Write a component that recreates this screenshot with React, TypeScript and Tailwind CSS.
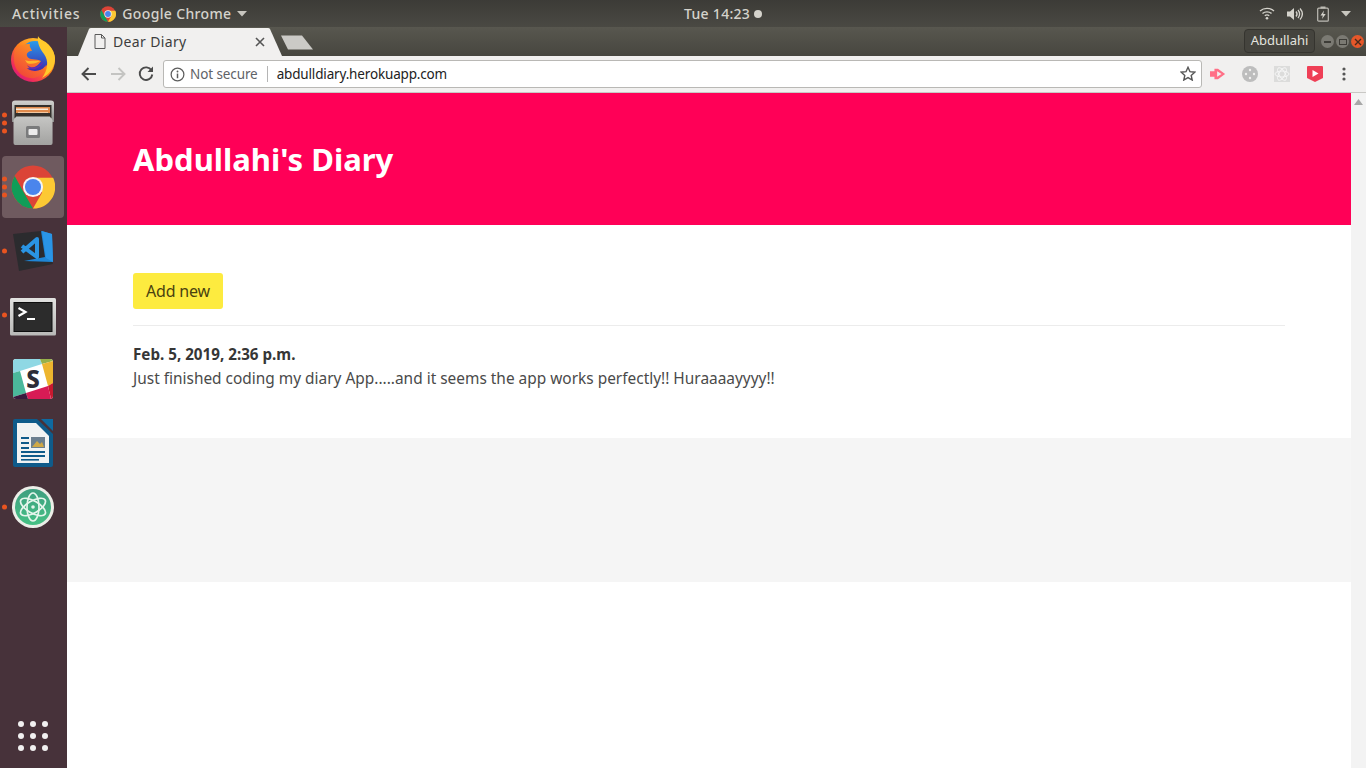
import React from "react";

const ubuntu = { fontFamily: '"Noto Sans","Open Sans",sans-serif' };

function Firefox() {
  return (
    <svg width="44" height="46" viewBox="0 0 44 46">
      <defs>
        <linearGradient id="ff1" x1="0.9" y1="0.1" x2="0.2" y2="0.95">
          <stop offset="0" stopColor="#ffd02e" />
          <stop offset="0.5" stopColor="#ff7a1c" />
          <stop offset="0.85" stopColor="#ef2b5c" />
          <stop offset="1" stopColor="#d81b7a" />
        </linearGradient>
        <linearGradient id="ff2" x1="0.5" y1="0" x2="0.5" y2="1">
          <stop offset="0" stopColor="#2a9bea" />
          <stop offset="1" stopColor="#3a2bb0" />
        </linearGradient>
        <linearGradient id="ff3" x1="0.8" y1="0" x2="0.2" y2="1">
          <stop offset="0" stopColor="#ff9a1f" />
          <stop offset="1" stopColor="#f0423a" />
        </linearGradient>
      </defs>
      <circle cx="22" cy="24" r="22" fill="url(#ff1)" />
      <circle cx="24" cy="20" r="15" fill="url(#ff2)" />
      <path d="M27 0 C29 5 43 9 44 22 C44 31 39 38 31 42 C37 34 38 25 33 18 C29 13 26 7 27 0Z" fill="#ffc92c" />
      <path d="M4 14 C8 9 13 8 19 8 C18 11 20 12 21 15 C18 15 15 17 16 20 C18 25 26 22 30 25 C27 30 22 33 16 32 C20 38 30 37 35 29 C33 38 26 43 19 42 C10 41 3 33 3 24 C3 20 3 17 4 14Z" fill="url(#ff3)" />
      <path d="M16 29 C20 33 28 32 32 25 C32 29 26 34 21 33 C19 33 17 31 16 29Z" fill="#6a2bb0" />
      <path d="M14 24 C18 26 24 24 29 25 C26 27 20 29 16 27Z" fill="#ffb52a" />
    </svg>
  );
}

function Files() {
  return (
    <svg width="42" height="46" viewBox="0 0 42 46">
      <defs>
        <linearGradient id="fg" x1="0" y1="0" x2="0" y2="1">
          <stop offset="0" stopColor="#c6c6c4" />
          <stop offset="1" stopColor="#a2a2a0" />
        </linearGradient>
        <linearGradient id="ft" x1="0" y1="0" x2="0" y2="1">
          <stop offset="0" stopColor="#d2d2d0" />
          <stop offset="1" stopColor="#8b8b89" />
        </linearGradient>
      </defs>
      <path d="M0 3 Q0 0.5 3 0.5 H39 Q42 0.5 42 3 V22 H0Z" fill="url(#ft)" />
      <rect x="2.5" y="5" width="37" height="13" fill="#34302c" />
      <rect x="4" y="7" width="34" height="6" fill="#e08a4c" />
      <rect x="4" y="8.5" width="32" height="1.5" fill="#f8ecdc" />
      <rect x="6" y="12" width="30" height="1" fill="#f3c79f" />
      <path d="M0 20 L3 16.5 H39 L42 20 V43 Q42 45 40 45 H2 Q0 45 0 43Z" fill="url(#fg)" transform="translate(1.5 0) scale(0.93 1)" />
      <rect x="14" y="26" width="14" height="12" rx="1.5" fill="#7a7b7c" />
      <rect x="16.5" y="29" width="9" height="6" rx="1" fill="#ececec" />
    </svg>
  );
}

function Chrome({ size = 44 }: { size?: number }) {
  return (
    <svg width={size} height={size} viewBox="0 0 48 48">
      <circle cx="24" cy="24" r="23.5" fill="#db4437" />
      <path d="M4 12 L14 30 L24 47.5 A23.5 23.5 0 0 1 4 12Z" fill="#109d58" />
      <path d="M24 14 H46 A23.5 23.5 0 0 1 24 47.5 L34 30Z" fill="#fcc934" />
      <circle cx="24" cy="24" r="11" fill="#f5f5f5" />
      <circle cx="24" cy="24" r="8.8" fill="#4a85ec" />
    </svg>
  );
}

function VSCode() {
  return (
    <svg width="44" height="42" viewBox="0 0 44 42">
      <path d="M2 4 L30 1 L42 34 L8 41Z" fill="#2b2b2e" />
      <path d="M30 1 L41 4 L42 32 L13 31 L34 27Z" fill="#1f86d6" />
      <path d="M31 1 L41 4 L42 32 L35 28Z" fill="#2a95e6" />
      <path d="M11 16 L26 27 V9 L11 22" fill="none" stroke="#2a94e2" strokeWidth="4" strokeLinejoin="round" />
    </svg>
  );
}

function Terminal() {
  return (
    <svg width="46" height="38" viewBox="0 0 46 38">
      <defs>
        <linearGradient id="tb" x1="0" y1="0" x2="0" y2="1">
          <stop offset="0" stopColor="#e2e2e0" />
          <stop offset="1" stopColor="#b9b9b7" />
        </linearGradient>
      </defs>
      <rect x="0" y="0" width="46" height="37.5" rx="1.5" fill="url(#tb)" />
      <rect x="3.5" y="4" width="39" height="30" fill="#0e0e0e" />
      <rect x="4.5" y="5" width="37" height="28" fill="#2c2c2c" />
      <path d="M8.5 10 L15.5 14 L8.5 18" fill="none" stroke="#fff" strokeWidth="2.2" />
      <rect x="17" y="20" width="8" height="2" fill="#fff" />
    </svg>
  );
}

function Slack() {
  return (
    <svg width="40" height="40" viewBox="0 0 40 40">
      <clipPath id="sl"><rect width="40" height="40" rx="3" /></clipPath>
      <g clipPath="url(#sl)">
        <rect width="40" height="40" fill="#fff" />
        <path d="M0 0 H27 L29 5 L7 12 L0 14Z" fill="#8fd8e4" />
        <path d="M27 0 H40 V2 L29 5Z" fill="#96b04a" />
        <path d="M29 5 L40 2 V24 L35 27Z" fill="#edb52e" />
        <path d="M35 27 L40 24 V40 H38Z" fill="#c8192f" />
        <path d="M13 34 L35 27 L38 40 H15Z" fill="#d81b55" />
        <path d="M0 14 L7 12 L13 34 L0 38Z" fill="#4bb89b" />
        <path d="M0 38 L13 34 L15 40 H0Z" fill="#3a1a3e" />
      </g>
      <text x="20" y="29" textAnchor="middle" fontFamily="'Noto Sans',sans-serif" fontWeight="800" fontSize="24" fill="#2d2d38">S</text>
    </svg>
  );
}

function Writer() {
  return (
    <svg width="40" height="48" viewBox="0 0 40 48">
      <path d="M2 0 H24 L40 15 V46 Q40 48 38 48 H2 Q0 48 0 46 V2 Q0 0 2 0Z" fill="#0f5b8a" />
      <path d="M28 0 H40 V12Z" fill="#0f6aa0" />
      <path d="M4 4 H23 L36 17 V44 H4Z" fill="#f1f3f3" />
      <rect x="8" y="18" width="8" height="2" fill="#0f5b8a" />
      <rect x="8" y="23" width="8" height="2" fill="#0f5b8a" />
      <rect x="8" y="28" width="8" height="2" fill="#0f5b8a" />
      <rect x="18" y="18" width="14" height="11" fill="#6b7f8f" />
      <path d="M19 28 L24 22 L27 25 L29 23 L31 28Z" fill="#cfa846" />
      <rect x="8" y="32" width="24" height="2" fill="#0f5b8a" />
      <rect x="8" y="36" width="24" height="2" fill="#0f5b8a" />
      <rect x="8" y="40" width="18" height="1.6" fill="#0f5b8a" />
    </svg>
  );
}

function Atom() {
  return (
    <svg width="42" height="42" viewBox="0 0 42 42">
      <defs>
        <linearGradient id="at" x1="0" y1="0" x2="0" y2="1">
          <stop offset="0" stopColor="#3f9f80" />
          <stop offset="1" stopColor="#45c084" />
        </linearGradient>
      </defs>
      <circle cx="21" cy="21" r="21" fill="#eceee8" />
      <circle cx="21" cy="21" r="18" fill="url(#at)" />
      <g fill="none" stroke="#e6f5ec" strokeWidth="1.7">
        <ellipse cx="21" cy="21" rx="14" ry="6" transform="rotate(30 21 21)" />
        <ellipse cx="21" cy="21" rx="14" ry="6" transform="rotate(-30 21 21)" />
        <ellipse cx="21" cy="21" rx="14" ry="6" transform="rotate(90 21 21)" />
      </g>
      <circle cx="21" cy="21" r="1.8" fill="#e6f5ec" />
    </svg>
  );
}

function Dots({ n }: { n: number }) {
  return (
    <div className="absolute left-[2px] top-1/2 -translate-y-1/2 flex flex-col gap-[3px]">
      {Array.from({ length: n }).map((_, i) => (
        <span key={i} className="block w-[5px] h-[5px] rounded-full bg-[#e95420]" />
      ))}
    </div>
  );
}

function DockItem({ children, dots = 0, active = false, cls = "" }: { children: React.ReactNode; dots?: number; active?: boolean; cls?: string }) {
  return (
    <div className={"relative w-[66px] h-[64px] shrink-0 flex items-center justify-center " + cls}>
      {active && <div className="absolute left-[2px] top-[1px] w-[62px] h-[62px] rounded-[4px] bg-[#6f5a5f]" />}
      {dots > 0 && <Dots n={dots} />}
      <div className="relative flex">{children}</div>
    </div>
  );
}

function Dock() {
  return (
    <aside className="w-[67px] shrink-0 bg-[#47323a] flex flex-col pb-[8px] h-full">
      <DockItem><Firefox /></DockItem>
      <DockItem dots={3}><Files /></DockItem>
      <DockItem dots={3} active><Chrome /></DockItem>
      <DockItem dots={1}><VSCode /></DockItem>
      <DockItem dots={1} cls="pt-[3px]"><Terminal /></DockItem>
      <DockItem><Slack /></DockItem>
      <DockItem><Writer /></DockItem>
      <DockItem dots={1}><Atom /></DockItem>
      <div className="flex-1" />
      <div className="grid grid-cols-3 gap-[6px] w-[30px] ml-[18px] mb-[9px]">
        {Array.from({ length: 9 }).map((_, i) => (
          <span key={i} className="w-[6px] h-[6px] rounded-full bg-[#f1f0f0]" />
        ))}
      </div>
    </aside>
  );
}

function TopBar() {
  return (
    <header className="h-[27px] shrink-0 flex items-center justify-between bg-gradient-to-b from-[#3c3b37] to-[#4a4943] text-[#d5d3cc] text-[14px] relative" style={ubuntu}>
      <div className="flex items-center">
        <span className="ml-[12px] font-medium tracking-[0.8px]">Activities</span>
        <span className="ml-[20px] flex"><Chrome size={16} /></span>
        <span className="ml-[6px] font-medium tracking-[0.35px]">Google Chrome</span>
        <svg width="10" height="6" viewBox="0 0 10 6" className="ml-[6px]"><path d="M0 0 H10 L5 5.5Z" fill="#c8c6bf" /></svg>
      </div>
      <div className="absolute left-[684px] top-[3px] flex items-center font-medium tracking-[0.3px]">
        Tue 14:23
        <span className="ml-[4px] w-[8px] h-[8px] rounded-full bg-[#d5d3cc]" />
      </div>
      <div className="flex items-center mr-[15px]">
        <svg width="16" height="13" viewBox="0 0 16 13" fill="none" stroke="#d5d3cc" strokeWidth="1.4">
          <path d="M1 4 C5 0.5 11 0.5 15 4" />
          <path d="M3.5 6.5 C6 4.3 10 4.3 12.5 6.5" />
          <path d="M5.8 8.8 C7 7.8 9 7.8 10.2 8.8" />
          <circle cx="8" cy="11.3" r="1.3" fill="#d5d3cc" stroke="none" />
        </svg>
        <svg width="16" height="14" viewBox="0 0 16 14" className="ml-[12px]" fill="none" stroke="#d5d3cc" strokeWidth="1.3">
          <path d="M0 4.5 H3 L7 1 V13 L3 9.5 H0Z" fill="#d5d3cc" stroke="none" />
          <path d="M9 4.5 C10.3 6 10.3 8 9 9.5" />
          <path d="M11 3 C13 5.5 13 8.5 11 11" />
          <path d="M13 1.5 C16 5 16 9 13 12.5" />
        </svg>
        <svg width="12" height="16" viewBox="0 0 12 16" className="ml-[14px]">
          <rect x="0.7" y="2.2" width="10.6" height="13" rx="1" fill="none" stroke="#bdbbb4" strokeWidth="1.2" />
          <rect x="3.5" y="0.5" width="5" height="2" fill="#bdbbb4" />
          <path d="M7 4.5 L3.5 9.5 H5.8 L5 13 L8.7 8 H6.3Z" fill="#d5d3cc" />
        </svg>
        <svg width="10" height="6" viewBox="0 0 10 6" className="ml-[12px]"><path d="M0 0 H10 L5 5.5Z" fill="#c8c6bf" /></svg>
      </div>
    </header>
  );
}

function TabStrip() {
  return (
    <div className="h-[29px] shrink-0 flex items-end bg-gradient-to-b from-[#58574f] to-[#47463f] relative" style={ubuntu}>
      <svg width="204" height="28" viewBox="0 0 204 28" className="shrink-0 absolute left-[11px] bottom-0">
        <path d="M0 28 L11 1 Q11.5 0 13 0 H190 Q191.5 0 192 1 L204 28Z" fill="#f1f0ef" />
      </svg>
      <svg width="33" height="15" viewBox="0 0 33 15" className="absolute left-[214px] top-[8px]">
        <path d="M0 0.5 H21 L32 14.5 H7Z" fill="#cbcac6" />
      </svg>
      <svg width="12" height="15" viewBox="0 0 12 15" className="absolute left-[27px] top-[7px]" fill="none" stroke="#5a5a5a" strokeWidth="1">
        <path d="M1 0.5 H7.5 L11 4 V14.5 H1Z M7.5 0.5 V4 H11" />
      </svg>
      <span className="absolute left-[46px] top-[5px] text-[14px] leading-[20px] text-[#3d3d3d] tracking-[0.35px]">Dear Diary</span>
      <svg width="10" height="10" viewBox="0 0 10 10" className="absolute left-[188px] top-[10px]" stroke="#555" strokeWidth="1.6">
        <path d="M1 1 L9 9 M9 1 L1 9" />
      </svg>
      <div className="absolute right-[51px] top-[2px] h-[24px] w-[71px] rounded-[4px] border border-[#35342f] bg-[#45443e] flex items-center justify-center text-[#e4e3df] text-[13px]">
        Abdullahi
      </div>
      <div className="absolute right-[2px] top-[8px] flex gap-[2px] items-center">
        <span className="w-[13px] h-[13px] rounded-full bg-[#7b7a73] flex items-center justify-center"><span className="w-[7px] h-[2px] bg-[#3d3c37]" /></span>
        <span className="w-[13px] h-[13px] rounded-full bg-[#7b7a73] flex items-center justify-center"><span className="w-[8px] h-[6px] border border-[#3d3c37]" /></span>
        <span className="w-[13px] h-[13px] rounded-full bg-[#e6572a] flex items-center justify-center">
          <svg width="8" height="8" viewBox="0 0 8 8" stroke="#4a2a1c" strokeWidth="1.4"><path d="M1 1 L7 7 M7 1 L1 7" /></svg>
        </span>
      </div>
    </div>
  );
}

function Toolbar() {
  return (
    <div className="h-[37px] shrink-0 bg-[#f1f0ef] border-b border-[#c9c8c5] flex items-center relative" style={ubuntu}>
      <svg width="16" height="14" viewBox="0 0 16 14" className="ml-[14px]" fill="none" stroke="#4b4b4b" strokeWidth="1.9">
        <path d="M15 7 H2 M7.5 1 L1.5 7 L7.5 13" />
      </svg>
      <svg width="16" height="14" viewBox="0 0 16 14" className="ml-[13px]" fill="none" stroke="#c4c4c2" strokeWidth="1.9">
        <path d="M1 7 H14 M8.5 1 L14.5 7 L8.5 13" />
      </svg>
      <svg width="16" height="16" viewBox="0 0 16 16" className="ml-[12px]" fill="none" stroke="#4b4b4b" strokeWidth="1.9">
        <path d="M13.5 4.5 A6.3 6.3 0 1 0 14.3 8.5" />
        <path d="M15 0.5 V6 H9.5Z" fill="#4b4b4b" stroke="none" />
      </svg>
      <div className="ml-[9px] w-[1039px] h-[28px] bg-white rounded-[3px] border border-[#b9b8b5] flex items-center relative">
        <svg width="15" height="15" viewBox="0 0 16 16" className="ml-[6px]" fill="none" stroke="#5c5c5c" strokeWidth="1.3">
          <circle cx="8" cy="8" r="6.8" />
          <path d="M8 7 V12" strokeWidth="1.6" />
          <circle cx="8" cy="4.8" r="1" fill="#5c5c5c" stroke="none" />
        </svg>
        <span className="ml-[5px] text-[13.5px] text-[#5f6368] tracking-[-0.1px]">Not secure</span>
        <span className="ml-[9px] w-px h-[16px] bg-[#b5b5b5]" />
        <span className="ml-[9px] text-[13.5px] text-[#222] tracking-[-0.16px]">abdulldiary.herokuapp.com</span>
        <svg width="16" height="15" viewBox="0 0 16 15" className="absolute right-[5px] top-[5px]" fill="none" stroke="#555" strokeWidth="1.4">
          <path d="M8 1.3 L10 5.7 L14.8 6.2 L11.2 9.4 L12.2 14 L8 11.6 L3.8 14 L4.8 9.4 L1.2 6.2 L6 5.7Z" />
        </svg>
      </div>
      <svg width="16" height="14" viewBox="0 0 18 14" className="ml-[8px]">
        <path d="M0 4 H5 V1 L9 1 L17 7 L9 13 H5 V10 H0Z" fill="#ff6f86" />
        <path d="M8 4 L13 7 L8 10Z" fill="#f1f0ef" />
      </svg>
      <svg width="16" height="16" viewBox="0 0 16 16" className="ml-[16px]">
        <circle cx="8" cy="8" r="8" fill="#bdbdbd" />
        <circle cx="8" cy="4" r="1.2" fill="#f1f0ef" />
        <circle cx="8" cy="12" r="1.2" fill="#f1f0ef" />
        <circle cx="4" cy="8" r="1.2" fill="#f1f0ef" />
        <circle cx="12" cy="8" r="1.2" fill="#f1f0ef" />
      </svg>
      <svg width="16" height="16" viewBox="0 0 16 16" className="ml-[16px]">
        <rect width="16" height="16" fill="#dcdcdb" />
        <g fill="none" stroke="#f5f5f5" strokeWidth="1">
          <ellipse cx="8" cy="8" rx="7" ry="3" />
          <ellipse cx="8" cy="8" rx="7" ry="3" transform="rotate(60 8 8)" />
          <ellipse cx="8" cy="8" rx="7" ry="3" transform="rotate(120 8 8)" />
        </g>
      </svg>
      <svg width="16" height="16" viewBox="0 0 16 16" className="ml-[17px]">
        <path d="M0 1 Q0 0 1 0 H15 Q16 0 16 1 V12 L8 16 L0 12Z" fill="#ef3f56" />
        <path d="M5.5 4 L11.5 7.5 L5.5 11Z" fill="#fff" />
      </svg>
      <svg width="4" height="14" viewBox="0 0 4 14" className="ml-[19px]" fill="#555">
        <circle cx="2" cy="2" r="1.6" />
        <circle cx="2" cy="7" r="1.6" />
        <circle cx="2" cy="12" r="1.6" />
      </svg>
    </div>
  );
}

function Page() {
  return (
    <div className="flex-1 min-h-0 flex bg-white" style={ubuntu}>
      <main className="flex-1 min-w-0">
        <div className="h-[132px] bg-[#ff0057] pl-[66px] flex items-center">
          <h1 className="text-[31px] font-bold text-white">Abdullahi's Diary</h1>
        </div>
        <div className="h-[213px] bg-white px-[66px] pt-[48px]">
          <button className="w-[90px] h-[36px] rounded-[3px] bg-[#fdeb3f] text-[16px] tracking-[-0.2px] text-[#4a4210]">Add new</button>
          <div className="mt-[16px] border-t border-[#ececec]" />
          <p className="mt-[16px] text-[15.2px] leading-[24px] font-bold text-[#363636]">Feb. 5, 2019, 2:36 p.m.</p>
          <p className="mt-px text-[15.43px] leading-[24px] text-[#4a4a4a]">Just finished coding my diary App.....and it seems the app works perfectly!! Huraaaayyyy!!</p>
        </div>
        <div className="h-[144px] bg-[#f5f5f5]" />
      </main>
      <div className="w-[15px] shrink-0 bg-[#f3f3f3] flex flex-col items-center pt-[6px]">
        <svg width="9" height="6" viewBox="0 0 9 6"><path d="M4.5 0 L9 6 H0Z" fill="#a8a8a8" /></svg>
      </div>
    </div>
  );
}

export default function App() {
  return (
    <div className="w-[1366px] h-[768px] overflow-hidden flex flex-col">
      <TopBar />
      <div className="flex-1 min-h-0 flex">
        <Dock />
        <div className="flex-1 min-w-0 flex flex-col">
          <TabStrip />
          <Toolbar />
          <Page />
        </div>
      </div>
    </div>
  );
}
